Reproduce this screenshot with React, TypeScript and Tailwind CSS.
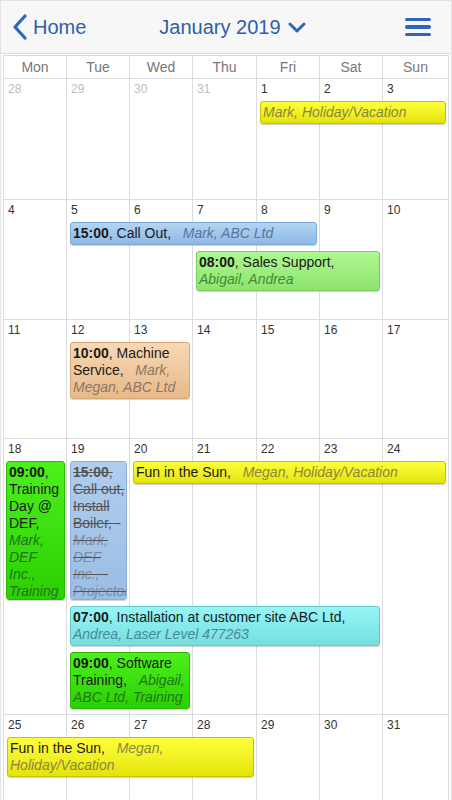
import React from "react";

type Ev = {
  col: string;
  row: string;
  cls: string;
  sub: string;
  time?: string;
  title?: string;
  who: string;
  strike?: boolean;
  h?: string;
};

const C = {
  yellow: "bg-linear-to-b from-[#ffff3a] to-[#e4e400] border-[#c4c400]",
  blue: "bg-linear-to-b from-[#b3d4f4] to-[#8fb9e6] border-[#7ea8d8]",
  green: "bg-linear-to-b from-[#adf890] to-[#8ee46e] border-[#7ccc60]",
  peach: "bg-linear-to-b from-[#f8d8b4] to-[#e8b88a] border-[#d8a878]",
  lime: "bg-linear-to-b from-[#4cf01c] to-[#2ad000] border-[#28b800]",
  paleblue: "bg-linear-to-b from-[#b0cdee] to-[#9bbde4] border-[#8eaed6]",
  cyan: "bg-linear-to-b from-[#96f6f6] to-[#76dede] border-[#66c8c8]",
};

function Event({ e }: { e: Ev }) {
  return (
    <div
      className={`${e.col} ${e.row} ${e.cls} ${e.h ?? ""} mx-[3px] mb-[6px] self-start overflow-hidden rounded-[3px] border px-[2px] pt-[2px] pb-[2px] text-[14px] leading-[17px] text-[#1a1a1a] shadow-[0_1px_1px_rgba(0,0,0,0.18)]`}
    >
      {e.time && <b className="font-bold">{e.time}</b>}
      {e.time && ", "}
      {e.title && <span>{e.title},&nbsp;&nbsp; </span>}
      <i className={e.sub}>{e.who}</i>
    </div>
  );
}

function StrikeEvent() {
  const main = ["Call out,", "Install", "Boiler, -"];
  const sub = ["Mark,", "DEF", "Inc., -", "Projector"];
  return (
    <div className="col-start-2 col-end-3 row-start-2 mx-[3px] mb-[6px] h-[139px] self-start overflow-hidden whitespace-nowrap rounded-[3px] border border-[#8eaed6] bg-linear-to-b from-[#b0cdee] to-[#9bbde4] px-[2px] pt-[2px] text-[14px] leading-[17px] text-[#555] line-through shadow-[0_1px_1px_rgba(0,0,0,0.18)]">
      <div>
        <b className="font-bold">15:00</b>,
      </div>
      {main.map((l) => (
        <div key={l}>{l}</div>
      ))}
      {sub.map((l) => (
        <div key={l} className="italic text-[#7b8aa0]">
          {l}
        </div>
      ))}
    </div>
  );
}

function Week({
  days,
  muted = [],
  h,
  events,
  last,
  children,
}: {
  days: string[];
  muted?: number[];
  h: string;
  events: Ev[];
  last?: boolean;
  children?: React.ReactNode;
}) {
  const cols = [
    "col-start-1",
    "col-start-2",
    "col-start-3",
    "col-start-4",
    "col-start-5",
    "col-start-6",
    "col-start-7",
  ];
  return (
    <div
      className={`grid ${h} grid-cols-[63px_63px_63px_64px_63px_63px_1fr] grid-rows-[22px_auto_auto_auto_1fr] border-l border-[#dcdcdc] ${last ? "" : "border-b"}`}
    >
      {days.map((d, i) => (
        <div
          key={i}
          className={`${cols[i]} row-[1/-1] border-r border-[#dcdcdc] pl-[4px] pt-[3px] text-[12px] leading-[14px] ${muted.includes(i) ? "text-[#bdbdbd]" : "text-[#333]"}`}
        >
          {d}
        </div>
      ))}
      {children}
      {events.map((e, i) => (
        <Event key={i} e={e} />
      ))}
    </div>
  );
}

export default function App() {
  return (
    <div className="flex h-[800px] w-[452px] flex-col overflow-hidden border-x border-t border-[#e2e2e2] bg-white font-['Liberation_Sans',Arial,sans-serif]">
      <div className="flex h-[53px] shrink-0 items-center border-b border-[#dedede] bg-[#f7f7f7] pl-[11px] pr-[20px] text-[#2b5fae]">
        <div className="flex items-center">
          <svg width="16" height="26" viewBox="0 0 16 26" className="mr-[5px]">
            <polyline
              points="13,2 3,13 13,24"
              fill="none"
              stroke="#2f66bd"
              strokeWidth="3.2"
              strokeLinecap="round"
              strokeLinejoin="round"
            />
          </svg>
          <span className="text-[20px] leading-none">Home</span>
        </div>
        <div className="ml-[73px] flex items-center">
          <span className="text-[20px] leading-none">January 2019</span>
          <svg width="18" height="12" viewBox="0 0 18 12" className="ml-[7px] mt-[1px]">
            <polyline
              points="2,2 9,9 16,2"
              fill="none"
              stroke="#2f66bd"
              strokeWidth="3"
              strokeLinecap="round"
              strokeLinejoin="round"
            />
          </svg>
        </div>
        <div className="ml-auto flex flex-col gap-[4px]">
          <div className="h-[3.5px] w-[26px] rounded-full bg-[#2f66bd]" />
          <div className="h-[3.5px] w-[26px] rounded-full bg-[#2f66bd]" />
          <div className="h-[3.5px] w-[26px] rounded-full bg-[#2f66bd]" />
        </div>
      </div>

      <div className="flex flex-1 flex-col px-[2px] pt-[1px]">
        <div className="grid h-[24px] shrink-0 grid-cols-[63px_63px_63px_64px_63px_63px_1fr] border-y border-l border-[#dcdcdc] text-[14px] text-[#777]">
          {["Mon", "Tue", "Wed", "Thu", "Fri", "Sat", "Sun"].map((d) => (
            <div key={d} className="flex items-center justify-center border-r border-[#dcdcdc]">
              {d}
            </div>
          ))}
        </div>

        <Week
          h="h-[121px] shrink-0"
          days={["28", "29", "30", "31", "1", "2", "3"]}
          muted={[0, 1, 2, 3]}
          events={[
            {
              col: "col-start-5 col-end-8",
              row: "row-start-2",
              cls: C.yellow,
              sub: "text-[#8a8640]",
              who: "Mark, Holiday/Vacation",
            },
          ]}
        />
        <Week
          h="h-[120px] shrink-0"
          days={["4", "5", "6", "7", "8", "9", "10"]}
          events={[
            {
              col: "col-start-2 col-end-6",
              row: "row-start-2",
              cls: C.blue,
              sub: "text-[#5b7595]",
              time: "15:00",
              title: "Call Out",
              who: "Mark, ABC Ltd",
            },
            {
              col: "col-start-4 col-end-7",
              row: "row-start-3",
              cls: C.green,
              sub: "text-[#3e8a36]",
              time: "08:00",
              title: "Sales Support",
              who: "Abigail, Andrea",
            },
          ]}
        />
        <Week
          h="h-[119px] shrink-0"
          days={["11", "12", "13", "14", "15", "16", "17"]}
          events={[
            {
              col: "col-start-2 col-end-4",
              row: "row-start-2",
              cls: C.peach,
              sub: "text-[#8a7766]",
              time: "10:00",
              title: "Machine Service",
              who: "Mark, Megan, ABC Ltd",
            },
          ]}
        />
        <Week
          h="h-[276px] shrink-0"
          days={["18", "19", "20", "21", "22", "23", "24"]}
          events={[
            {
              col: "col-start-1 col-end-2",
              row: "row-start-2",
              cls: C.lime,
              sub: "text-[#23751a]",
              time: "09:00",
              title: "Training Day @ DEF",
              who: "Mark, DEF Inc., Training",
              h: "h-[139px] !mx-[2px]",
            },
            {
              col: "col-start-3 col-end-8",
              row: "row-start-2",
              cls: C.yellow,
              sub: "text-[#8a8640]",
              title: "Fun in the Sun",
              who: "Megan, Holiday/Vacation",
            },
            {
              col: "col-start-2 col-end-7",
              row: "row-start-3",
              cls: C.cyan,
              sub: "text-[#4a8799]",
              time: "07:00",
              title: "Installation at customer site ABC Ltd",
              who: "Andrea, Laser Level 477263",
            },
            {
              col: "col-start-2 col-end-4",
              row: "row-start-4",
              cls: C.lime,
              sub: "text-[#23751a]",
              time: "09:00",
              title: "Software Training",
              who: "Abigail, ABC Ltd, Training",
            },
          ]}
        >
          <StrikeEvent />
        </Week>
        <Week
          h="flex-1"
          days={["25", "26", "27", "28", "29", "30", "31"]}
          last
          events={[
            {
              col: "col-start-1 col-end-5",
              row: "row-start-2",
              cls: C.yellow,
              sub: "text-[#8a8640]",
              title: "Fun in the Sun",
              who: "Megan, Holiday/Vacation",
            },
          ]}
        />
      </div>
    </div>
  );
}
